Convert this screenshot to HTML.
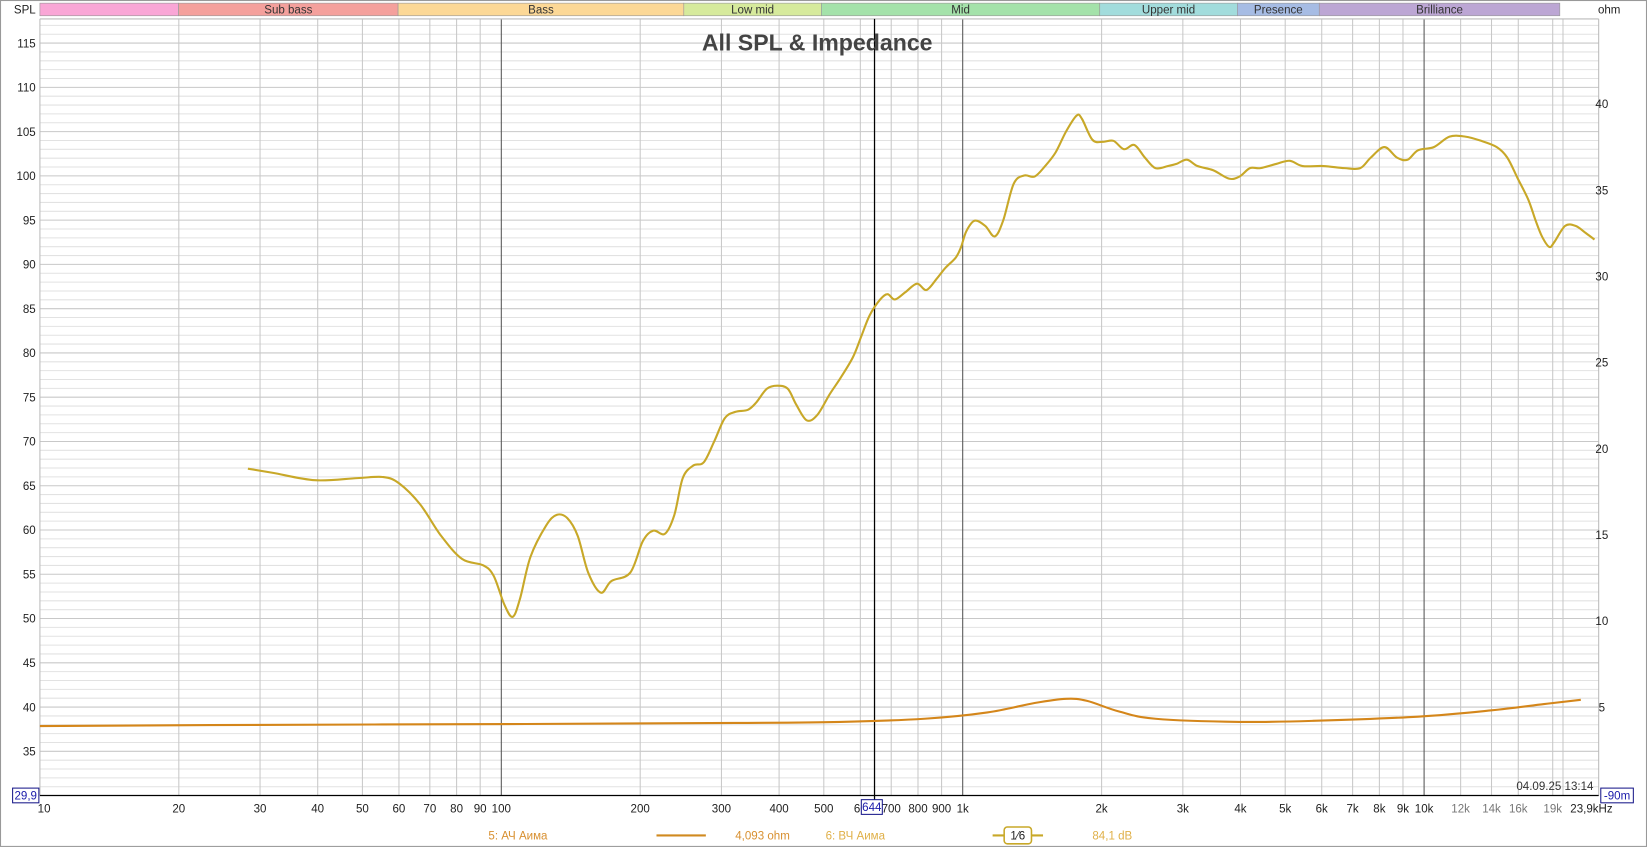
<!DOCTYPE html>
<html><head><meta charset="utf-8"><style>
html,body{margin:0;padding:0;background:#fff;}
svg{display:block;font-family:"Liberation Sans",sans-serif;}
</style></head><body>
<svg id="s" width="1647" height="848" viewBox="0 0 1568 807" preserveAspectRatio="none" xmlns="http://www.w3.org/2000/svg"></svg>
<script>
const s=document.getElementById('s');
let h='';
const L=38,R=1522,T=18,B=757;
const X=f=>L+Math.log10(f/10)/Math.log10(2390)*1484;
const Y=d=>41+(115-d)*8.425;
const YO=o=>99+(40-o)*16.4;
h+=`<rect x="0.5" y="0.5" width="1567" height="805" fill="#fff" stroke="#999"/>`;
// bands
const bands=[[38,170,'#f9a6d6',''],[170,379,'#f4a09c','Sub bass'],[379,651,'#fcd896','Bass'],[651,782,'#d6ea9c','Low mid'],[782,1047,'#a4e2aa','Mid'],[1047,1178,'#a2dcdc','Upper mid'],[1178,1256,'#a6bce4','Presence'],[1256,1485,'#bca6d4','Brilliance']];
bands.forEach(b=>{h+=`<rect x="${b[0]}" y="3" width="${b[1]-b[0]}" height="12" fill="${b[2]}" stroke="#999" stroke-width="0.6"/>`;
if(b[3])h+=`<text x="${(b[0]+b[1])/2}" y="13" font-size="11" text-anchor="middle" fill="#333">${b[3]}</text>`;});
h+=`<text x="34" y="13" font-size="11" text-anchor="end" fill="#222">SPL</text>`;
h+=`<text x="1532" y="13" font-size="11" text-anchor="middle" fill="#222">ohm</text>`;
// horizontal grid
for(let d=30;d<=117;d++){const y=Y(d);if(y<T||y>B)continue;h+=`<line x1="${L}" x2="${R}" y1="${y}" y2="${y}" stroke="${d%5?'#e2e2e2':'#c8c8c8'}" stroke-width="1"/>`;
if(d%5==0&&d>=35)h+=`<text x="34" y="${y+4}" font-size="11" text-anchor="end" fill="#222">${d}</text>`;}
// vertical grid
const fs=[];for(let dec=10;dec<=10000;dec*=10)for(let k=1;k<10;k++){const f=dec*k;if(f<=23900)fs.push(f);}
fs.forEach(f=>{if(f<=10)return;const x=X(f);const major=[100,1000,10000].includes(f);h+=`<line x1="${x}" x2="${x}" y1="${T}" y2="${B}" stroke="${major?'#555':'#c8c8c8'}" stroke-width="1"/>`;});
[12000,14000,16000,19000].forEach(f=>{const x=X(f);h+=`<line x1="${x}" x2="${x}" y1="${T}" y2="${B}" stroke="#c8c8c8"/>`;});
h+=`<line x1="${L}" x2="${L}" y1="${T}" y2="${B}" stroke="#bbb"/>`;
h+=`<line x1="${R}" x2="${R}" y1="${T}" y2="${B}" stroke="#bbb"/>`;
h+=`<line x1="${L}" x2="${R}" y1="${T}" y2="${T}" stroke="#bbb"/>`;
// cursor
h+=`<line x1="${X(644)}" x2="${X(644)}" y1="${T}" y2="${B+5}" stroke="#000" stroke-width="1.2"/>`;
// ohm labels
[40,35,30,25,20,15,10,5].forEach(o=>{h+=`<text x="1525" y="${YO(o)+4}" font-size="11" text-anchor="middle" fill="#222">${o}</text>`;});
// title
h+=`<text x="778" y="48" font-size="22" font-weight="bold" text-anchor="middle" fill="#444">All SPL &amp; Impedance</text>`;
// axis
h+=`<line x1="${L}" x2="${R}" y1="${B}" y2="${B}" stroke="#000" stroke-width="1.2"/>`;
const xl=[[10,'10'],[20,'20'],[30,'30'],[40,'40'],[50,'50'],[60,'60'],[70,'70'],[80,'80'],[90,'90'],[100,'100'],[200,'200'],[300,'300'],[400,'400'],[500,'500'],[600,'60'],[700,'700'],[800,'800'],[900,'900'],[1000,'1k'],[2000,'2k'],[3000,'3k'],[4000,'4k'],[5000,'5k'],[6000,'6k'],[7000,'7k'],[8000,'8k'],[9000,'9k'],[10000,'10k']];
xl.forEach(a=>{let x=X(a[0]);if(a[0]==10)x+=4;h+=`<text x="${x}" y="773" font-size="11" text-anchor="middle" fill="#222">${a[1]}</text>`;});
[[12000,'12k'],[14000,'14k'],[16000,'16k'],[19000,'19k']].forEach(a=>{h+=`<text x="${X(a[0])}" y="773" font-size="11" text-anchor="middle" fill="#777">${a[1]}</text>`;});
h+=`<text x="1495" y="773" font-size="11" fill="#222">23,9kHz</text>`;
h+=`<text x="1517" y="752" font-size="11" text-anchor="end" fill="#333">04.09.25 13:14</text>`;
h+=`<rect x="12" y="750" width="25" height="14" fill="#fff" stroke="#1a1a8a"/><text x="24.5" y="761" font-size="11" text-anchor="middle" fill="#1a1aaa">29,9</text>`;
h+=`<rect x="1524" y="750" width="31" height="14" fill="#fff" stroke="#1a1a8a"/><text x="1539.5" y="761" font-size="11" text-anchor="middle" fill="#1a1aaa">-90m</text>`;
h+=`<rect x="820" y="761" width="20" height="14" fill="#fff" stroke="#1a1a8a"/><text x="830" y="772" font-size="11" text-anchor="middle" fill="#1a1aaa">644</text>`;
// legend
h+=`<text x="465" y="799" font-size="11" fill="#d89030">5: АЧ Аима</text>`;
h+=`<line x1="625" x2="672" y1="795" y2="795" stroke="#d08a20" stroke-width="2"/>`;
h+=`<text x="700" y="799" font-size="11" fill="#d89030">4,093 ohm</text>`;
h+=`<text x="786" y="799" font-size="11" fill="#e0b048">6: ВЧ Аима</text>`;
h+=`<line x1="945" x2="993" y1="795" y2="795" stroke="#c8a828" stroke-width="2"/>`;
h+=`<rect x="956" y="787" width="26" height="16" rx="3" fill="#fff" stroke="#c8a828" stroke-width="1.5"/><text x="969" y="799" font-size="11" text-anchor="middle" fill="#222">1⁄6</text>`;
h+=`<text x="1040" y="799" font-size="11" fill="#e0b048">84,1 dB</text>`;
// curves
const spl=[[236,446],[260,450],[300,457],[340,455],[365,454],[380,460],[400,480],[420,510],[440,532],[460,538],[470,548],[480,575],[488,587],[495,570],[505,530],[520,500],[530,490],[540,493],[550,510],[560,545],[572,564],[582,553],[600,545],[612,515],[622,505],[633,508],[642,490],[650,455],[660,443],[670,440],[680,420],[690,398],[700,392],[712,390],[720,383],[730,370],[740,367],[750,370],[758,385],[768,400],[778,395],[790,375],[800,360],[812,340],[820,320],[828,300],[838,285],[845,280],[852,285],[862,278],[873,270],[882,276],[892,265],[900,255],[910,245],[915,235],[920,220],[928,210],[938,215],[947,225],[955,210],[965,175],[975,167],[985,168],[995,158],[1005,145],[1015,125],[1025,110],[1030,113],[1040,133],[1050,135],[1060,134],[1070,142],[1080,138],[1090,150],[1100,160],[1112,158],[1120,156],[1130,152],[1140,158],[1155,162],[1170,170],[1180,168],[1190,160],[1200,160],[1215,156],[1228,153],[1240,158],[1260,158],[1280,160],[1295,160],[1305,150],[1318,140],[1330,150],[1340,152],[1350,143],[1365,140],[1380,130],[1395,130],[1410,134],[1425,140],[1435,150],[1445,170],[1455,190],[1462,210],[1468,225],[1475,235],[1480,230],[1490,215],[1500,215],[1510,222],[1518,228]];
const imp=[[38,691],[200,690],[500,689],[700,688],[800,687],[880,684],[940,678],[985,669],[1015,665],[1035,667],[1065,677],[1100,684],[1180,687],[1250,686],[1350,682],[1420,676],[1470,670],[1505,666]];
function smooth(p){let d=`M${p[0][0]},${p[0][1]}`;for(let i=0;i<p.length-1;i++){const p0=p[i-1]||p[i],p1=p[i],p2=p[i+1],p3=p[i+2]||p2;
d+=` C${p1[0]+(p2[0]-p0[0])/6},${p1[1]+(p2[1]-p0[1])/6} ${p2[0]-(p3[0]-p1[0])/6},${p2[1]-(p3[1]-p1[1])/6} ${p2[0]},${p2[1]}`;}return d;}
h+=`<path d="${smooth(imp)}" fill="none" stroke="#d4861a" stroke-width="2"/>`;
h+=`<path d="${smooth(spl)}" fill="none" stroke="#c8a828" stroke-width="2"/>`;
s.innerHTML=h;
</script>
</body></html>
